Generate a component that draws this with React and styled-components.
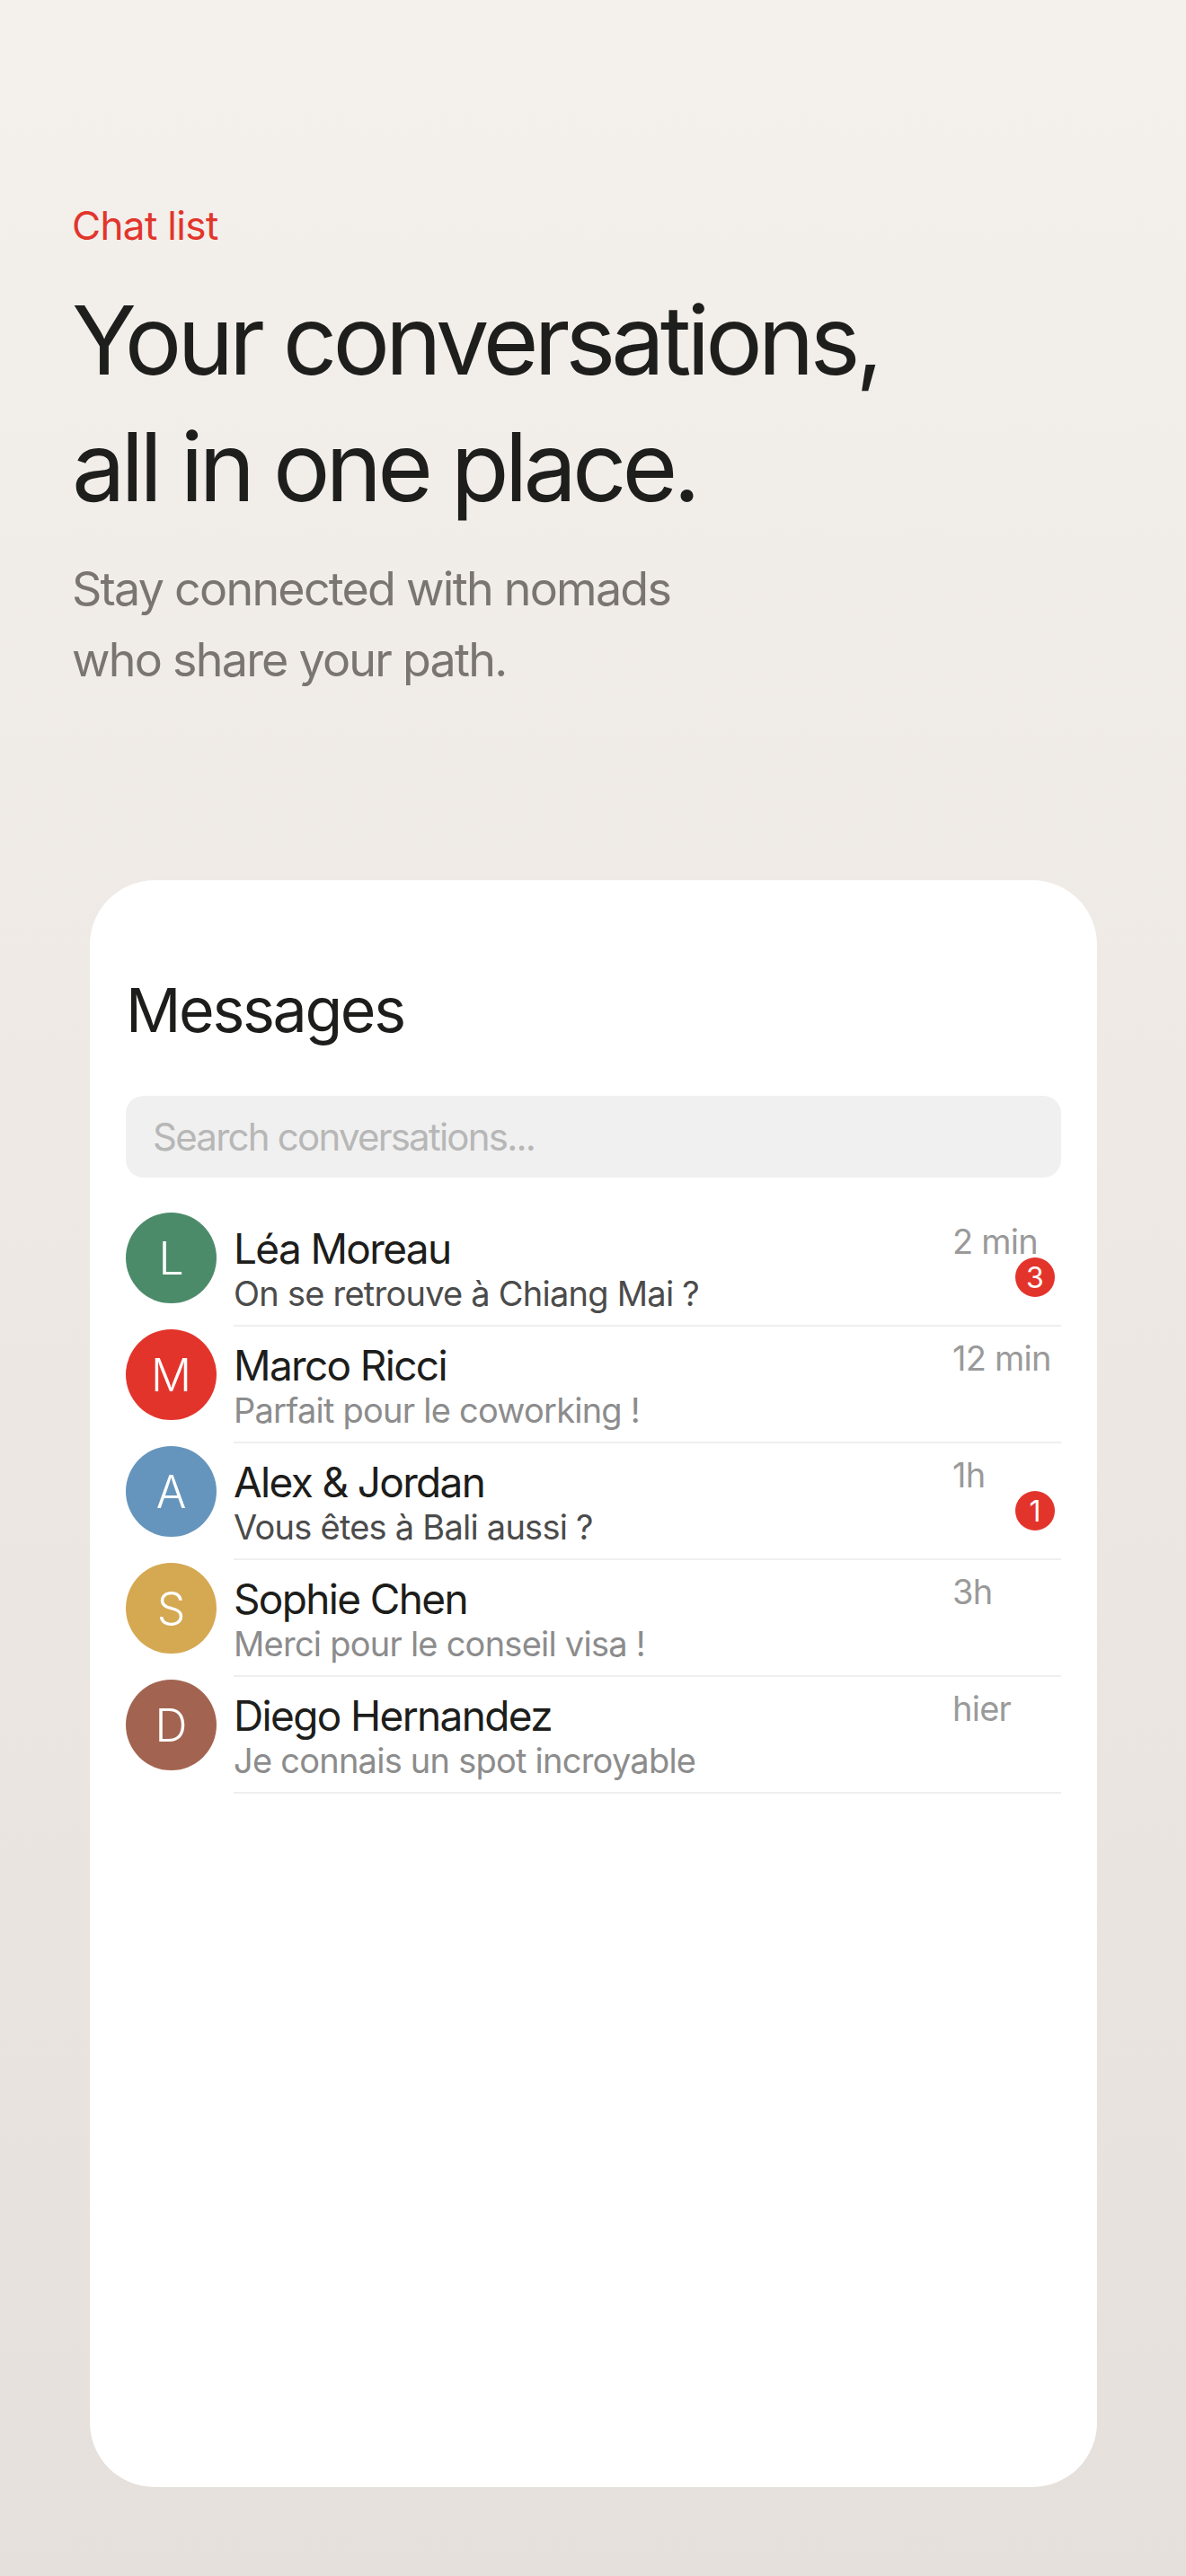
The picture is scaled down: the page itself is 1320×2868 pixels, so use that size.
import React from "react";
import styled, { createGlobalStyle } from "styled-components";

const GlobalStyle = createGlobalStyle`
  html, body {
    margin: 0;
    padding: 0;
  }
  body {
    font-family: Inter, "Noto Sans", "Liberation Sans", sans-serif;
    background: #e5e0dc;
  }
  * {
    box-sizing: border-box;
  }
`;

const Page = styled.div`
  min-height: 2868px;
  display: flex;
  flex-direction: column;
  padding: 225px 99px 99px 80px;
  background: linear-gradient(180deg, #f4f0ec 0%, #ede8e4 50%, #e5e0dc 100%);
`;

const Hero = styled.header`
  display: flex;
  flex-direction: column;
`;

const Eyebrow = styled.div`
  font-size: 44px;
  line-height: 53px;
  letter-spacing: -0.015em;
  color: #e2352b;
`;

const Title = styled.h1`
  margin: 30px 0 0;
  font-size: 106px;
  line-height: 141px;
  font-weight: 400;
  letter-spacing: -0.047em;
  color: #1e1e1c;
`;

const Subtitle = styled.p`
  margin: 26px 0 0;
  max-width: 720px;
  font-size: 52px;
  line-height: 79px;
  letter-spacing: -0.034em;
  color: #7a7571;
`;

const Card = styled.section`
  flex: 1;
  margin: 206px 0 0 20px;
  padding: 103px 40px 40px;
  background: #ffffff;
  border-radius: 72px;
  display: flex;
  flex-direction: column;
`;

const CardTitle = styled.h2`
  margin: 0;
  font-size: 68px;
  line-height: 82px;
  font-weight: 400;
  letter-spacing: -0.034em;
  color: #1d1d1b;
`;

const Search = styled.div`
  margin-top: 55px;
  height: 91px;
  padding: 0 30px;
  display: flex;
  align-items: center;
  background: #f0f0f0;
  border-radius: 20px;
  font-size: 42px;
  letter-spacing: -0.042em;
  color: #b7b7b7;
`;

const List = styled.ul`
  list-style: none;
  margin: 39px 0 0;
  padding: 0;
  display: flex;
  flex-direction: column;
  gap: 3px;
`;

const Row = styled.li`
  display: flex;
  align-items: flex-start;
  gap: 19px;
`;

const Avatar = styled.div`
  flex: none;
  width: 101px;
  height: 101px;
  border-radius: 50%;
  background: ${(p) => p.$color};
  color: #ffffff;
  display: flex;
  align-items: center;
  justify-content: center;
  font-size: 50px;
  font-weight: 300;
`;

const Body = styled.div`
  flex: 1;
  display: flex;
  padding: 12px 7px 12px 0;
  border-bottom: 2px solid #efefef;
`;

const Main = styled.div`
  flex: 1;
  min-width: 0;
`;

const Name = styled.div`
  font-size: 46px;
  line-height: 56px;
  letter-spacing: -0.036em;
  color: #1d1d1b;
`;

const Preview = styled.div`
  font-size: 38px;
  line-height: 45px;
  letter-spacing: -0.02em;
  color: ${(p) => (p.$unread ? "#4b4b4b" : "#8c8c8c")};
  white-space: nowrap;
`;

const Meta = styled.div`
  flex: none;
  width: 114px;
  margin-top: 2px;
  display: flex;
  flex-direction: column;
  align-items: flex-end;
`;

const Time = styled.div`
  align-self: stretch;
  font-size: 38px;
  line-height: 36px;
  letter-spacing: -0.02em;
  color: #9a9a9a;
`;

const Badge = styled.div`
  width: 44px;
  height: 44px;
  border-radius: 50%;
  background: #e3342b;
  color: #ffffff;
  font-size: 32px;
  display: flex;
  align-items: center;
  justify-content: center;
`;

const chats = [
  { initial: "L", color: "#4c8b6a", name: "Léa Moreau", text: "On se retrouve à Chiang Mai ?", time: "2 min", unread: 3 },
  { initial: "M", color: "#e3342b", name: "Marco Ricci", text: "Parfait pour le coworking !", time: "12 min" },
  { initial: "A", color: "#6595bc", name: "Alex & Jordan", text: "Vous êtes à Bali aussi ?", time: "1h", unread: 1 },
  { initial: "S", color: "#d5a852", name: "Sophie Chen", text: "Merci pour le conseil visa !", time: "3h" },
  { initial: "D", color: "#a26450", name: "Diego Hernandez", text: "Je connais un spot incroyable", time: "hier" },
];

export default function App() {
  return (
    <>
      <GlobalStyle />
      <Page>
        <Hero>
          <Eyebrow>Chat list</Eyebrow>
          <Title>
            Your conversations,
            <br />
            all in one place.
          </Title>
          <Subtitle>Stay connected with nomads who share your path.</Subtitle>
        </Hero>

        <Card>
          <CardTitle>Messages</CardTitle>
          <Search>Search conversations...</Search>
          <List>
            {chats.map((chat) => (
              <Row key={chat.name}>
                <Avatar $color={chat.color}>{chat.initial}</Avatar>
                <Body>
                  <Main>
                    <Name>{chat.name}</Name>
                    <Preview $unread={!!chat.unread}>{chat.text}</Preview>
                  </Main>
                  <Meta>
                    <Time>{chat.time}</Time>
                    {chat.unread && <Badge>{chat.unread}</Badge>}
                  </Meta>
                </Body>
              </Row>
            ))}
          </List>
        </Card>
      </Page>
    </>
  );
}
